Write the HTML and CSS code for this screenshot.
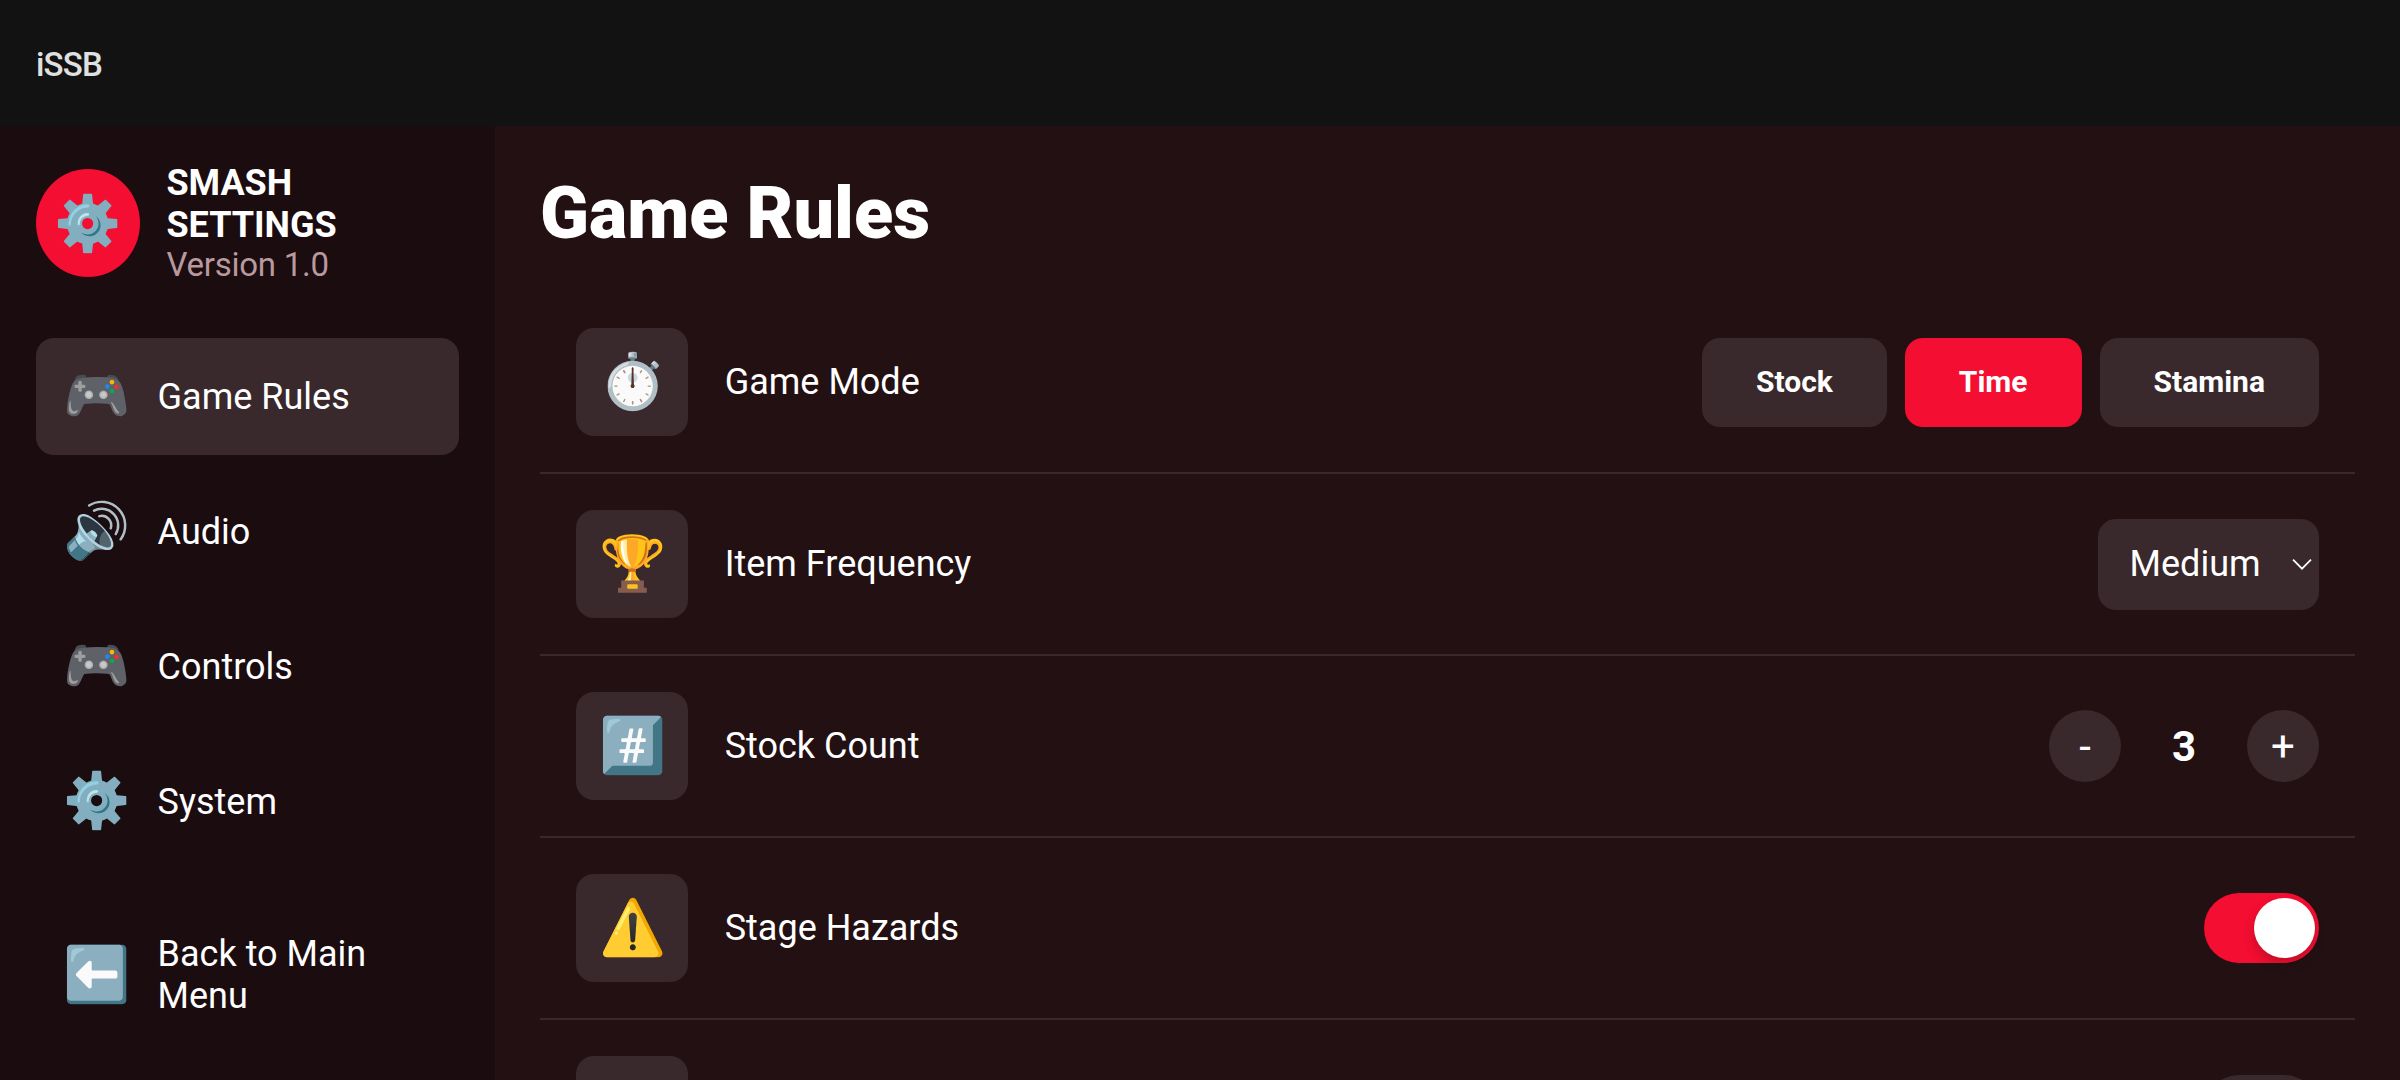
FILE: index.html
```html
<!DOCTYPE html>
<html lang="en">
<head>
<meta charset="utf-8">
<title>iSSB</title>
<link rel="stylesheet" href="styles.css">
</head>
<body>
<header class="appbar">iSSB</header>
<div class="layout">
  <aside class="sidebar">
    <div class="brand">
      <div class="brand-icon">⚙️</div>
      <div class="brand-text">
        <div class="brand-name">SMASH SETTINGS</div>
        <div class="brand-version">Version 1.0</div>
      </div>
    </div>
    <nav class="nav">
      <a class="nav-item active"><span class="emoji">🎮</span><span>Game Rules</span></a>
      <a class="nav-item"><span class="emoji">🔊</span><span>Audio</span></a>
      <a class="nav-item"><span class="emoji">🎮</span><span>Controls</span></a>
      <a class="nav-item"><span class="emoji">⚙️</span><span>System</span></a>
    </nav>
    <a class="nav-item back"><span class="emoji">⬅️</span><span>Back to Main Menu</span></a>
  </aside>
  <main class="content">
    <h1 class="title">Game Rules</h1>
    <section class="row">
      <div class="tile">⏱️</div>
      <div class="label">Game Mode</div>
      <div class="modes">
        <button class="mode">Stock</button>
        <button class="mode selected">Time</button>
        <button class="mode">Stamina</button>
      </div>
    </section>
    <section class="row">
      <div class="tile">🏆</div>
      <div class="label">Item Frequency</div>
      <div class="select">
        <span>Medium</span>
        <svg class="chevron" viewBox="0 0 20 12" fill="none" stroke="currentColor" stroke-width="1.7"><path d="M1 1.7 10 10.7 19 1.7"/></svg>
      </div>
    </section>
    <section class="row">
      <div class="tile">#️⃣</div>
      <div class="label">Stock Count</div>
      <div class="stepper">
        <button class="step">-</button>
        <span class="count">3</span>
        <button class="step">+</button>
      </div>
    </section>
    <section class="row">
      <div class="tile">⚠️</div>
      <div class="label">Stage Hazards</div>
      <div class="toggle on"><span class="knob"></span></div>
    </section>
    <section class="row">
      <div class="tile"></div>
      <div class="label"></div>
      <div class="toggle"></div>
    </section>
  </main>
</div>
</body>
</html>
```
FILE: styles.css
```css
* {
  box-sizing: border-box;
}

body {
  margin: 0;
  height: 1080px;
  overflow: hidden;
  display: flex;
  flex-direction: column;
  background: #231012;
  color: #fff;
  font: 36px/42px Roboto, "Noto Color Emoji", sans-serif;
}

.appbar {
  flex: none;
  height: 126px;
  padding: 3px 36px 0;
  display: flex;
  align-items: center;
  background: #121212;
  color: #e0e0e0;
  font-size: 33px;
  font-weight: 500;
  letter-spacing: -0.8px;
}

.layout {
  flex: 1;
  min-height: 0;
  display: flex;
}

.sidebar {
  width: 495px;
  flex: none;
  padding: 36px;
  display: flex;
  flex-direction: column;
  background: #1b0c10;
}

.brand {
  display: flex;
  align-items: center;
  gap: 26.4px;
  height: 122px;
  margin-bottom: 54px;
}

.brand-icon {
  flex: none;
  width: 104px;
  height: 108px;
  display: flex;
  align-items: center;
  justify-content: center;
  border-radius: 50%;
  background: #f40e31;
  font-size: 54px;
  line-height: 63px;
}

.brand-name {
  font-weight: 700;
}

.brand-version {
  color: #b8999e;
  font-size: 33px;
  line-height: 38px;
  letter-spacing: -0.25px;
}

.nav {
  display: flex;
  flex-direction: column;
  gap: 18px;
}

.nav-item {
  display: flex;
  align-items: center;
  gap: 27px;
  padding: 27px;
  border-radius: 18px;
}

.nav-item.active {
  background: #39282c;
}

.back {
  margin-top: auto;
}

.emoji {
  flex: none;
  width: 67.6px;
  padding-bottom: 2px;
  font-size: 54px;
  line-height: 61px;
}

.content {
  flex: 1;
  min-width: 0;
  padding: 45px 45px 0;
  overflow: hidden;
}

.title {
  margin: 0 0 36px;
  font-size: 72px;
  line-height: 85px;
  font-weight: 900;
}

.row {
  display: flex;
  align-items: center;
  gap: 36.7px;
  padding: 36px;
  border-bottom: 2px solid #39282c;
}

.tile {
  flex: none;
  width: 112px;
  height: 108px;
  padding: 0 0 2px 1px;
  display: flex;
  align-items: center;
  justify-content: center;
  border-radius: 18px;
  background: #39282c;
  font-size: 54px;
  line-height: 61px;
}

.label {
  flex: 1;
}

.modes {
  display: flex;
  gap: 18px;
}

.mode {
  height: 89px;
  padding: 0 54px 2px;
  border: 0;
  border-radius: 18px;
  background: #39282c;
  color: #fff;
  font: 700 30px/35px Roboto, sans-serif;
}

.mode.selected {
  background: #f40e31;
}

.select {
  width: 221px;
  height: 91px;
  padding: 0 7px 0 31.6px;
  display: flex;
  align-items: center;
  justify-content: space-between;
  border-radius: 18px;
  background: #39282c;
}

.chevron {
  width: 20px;
  height: 12px;
}

.stepper {
  display: flex;
  align-items: center;
  gap: 36px;
}

.step {
  width: 72px;
  height: 72px;
  padding: 0;
  border: 0;
  border-radius: 50%;
  background: #39282c;
  color: #fff;
  font: 400 42px/49px Roboto, sans-serif;
}

.count {
  width: 54px;
  text-align: center;
  font-size: 42px;
  line-height: 49px;
  font-weight: 700;
}

.toggle {
  width: 115px;
  height: 70px;
  padding: 5px 4px;
  display: flex;
  border-radius: 35px;
  background: #39282c;
}

.toggle.on {
  justify-content: flex-end;
  background: #f40e31;
}

.knob {
  width: 61px;
  height: 60px;
  border-radius: 50%;
  background: #fff;
  box-shadow: 0 6px 12px rgba(0, 0, 0, 0.2);
}
```
